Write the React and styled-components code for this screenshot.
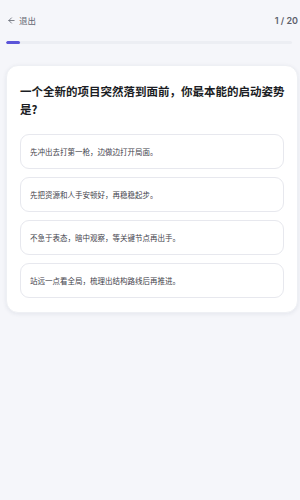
import React from "react";
import styled, { createGlobalStyle } from "styled-components";

const Global = createGlobalStyle`
  html, body { margin: 0; padding: 0; background: #f5f6fa; }
  body { font-family: Inter, "Noto Sans CJK SC", sans-serif; }
`;

const Page = styled.div`
  width: 300px;
  min-height: 500px;
  box-sizing: border-box;
  padding: 12px 6px 0 6px;
  background: #f5f6fa;
`;

const Header = styled.div`
  display: flex;
  align-items: center;
  justify-content: space-between;
  height: 16px;
  padding: 0 0 0 1px;
`;

const Back = styled.button`
  display: flex;
  align-items: center;
  gap: 3px;
  border: 0;
  background: none;
  padding: 0;
  font-family: Inter, "Noto Sans CJK SC", sans-serif;
  font-size: 8.5px;
  color: #646873;
`;

const Count = styled.span`
  font-size: 9px;
  font-weight: 600;
  color: #5c606b;
  margin-right: -4px;
`;

const Track = styled.div`
  margin-top: 13px;
  margin-right: 2px;
  height: 3px;
  border-radius: 2px;
  background: #eceef3;
  overflow: hidden;
`;

const Fill = styled.div`
  height: 100%;
  border-radius: 2px;
  background: #5b55d9;
`;

const Card = styled.div`
  margin-top: 21px;
  background: #fff;
  border-radius: 12px;
  box-shadow: 0 1px 4px rgba(30, 40, 80, 0.08);
  border: 1px solid #eef0f4;
  padding: 16px 13px 14px 13px;
  width: 292px;
  box-sizing: border-box;
`;

const Title = styled.h2`
  margin: 0 -4px 16px 0;
  font-size: 11.5px;
  line-height: 18px;
  font-weight: 700;
  color: #1b1d24;
  font-family: "Noto Sans CJK SC", sans-serif;
`;

const Options = styled.div`
  display: flex;
  flex-direction: column;
  gap: 8px;
`;

const Option = styled.div`
  height: 35px;
  box-sizing: border-box;
  display: flex;
  align-items: center;
  padding: 0 9px;
  border: 1px solid #e7e8ee;
  border-radius: 9px;
  background: #fff;
  font-size: 7.5px;
  color: #3f424b;
  font-family: "Noto Sans CJK SC", sans-serif;
`;

const options = [
  "先冲出去打第一枪，边做边打开局面。",
  "先把资源和人手安顿好，再稳稳起步。",
  "不急于表态，暗中观察，等关键节点再出手。",
  "站远一点看全局，梳理出结构路线后再推进。",
];

export default function App() {
  return (
    <>
      <Global />
      <Page>
        <Header>
          <Back>
            <svg width="9" height="9" viewBox="0 0 24 24" fill="none" stroke="#646873" strokeWidth="2.2" strokeLinecap="round" strokeLinejoin="round">
              <path d="M19 12H5" />
              <path d="M12 19l-7-7 7-7" />
            </svg>
            退出
          </Back>
          <Count>1 / 20</Count>
        </Header>
        <Track>
          <Fill style={{ width: `${(1 / 20) * 100}%` }} />
        </Track>
        <Card>
          <Title>一个全新的项目突然落到面前，你最本能的启动姿势是?</Title>
          <Options>
            {options.map((o) => (
              <Option key={o}>{o}</Option>
            ))}
          </Options>
        </Card>
      </Page>
    </>
  );
}
